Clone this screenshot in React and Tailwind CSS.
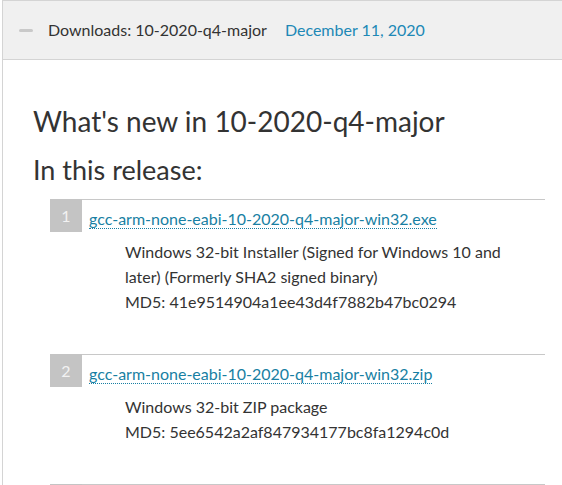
const files = [
  {
    num: 1,
    name: "gcc-arm-none-eabi-10-2020-q4-major-win32.exe",
    lines: [
      "Windows 32-bit Installer (Signed for Windows 10 and later) (Formerly SHA2 signed binary)",
      "MD5: 41e9514904a1ee43d4f7882b47bc0294",
    ],
  },
  {
    num: 2,
    name: "gcc-arm-none-eabi-10-2020-q4-major-win32.zip",
    lines: ["Windows 32-bit ZIP package", "MD5: 5ee6542a2af847934177bc8fa1294c0d"],
  },
  // third entry is cut off by the bottom of the window
  { num: null, name: "", lines: [] },
];

const FileItem = ({ item }) => (
  <div className="flex mb-[40px]">
    <div className="w-[32px] h-[33px] shrink-0 bg-[#c4c4c4] text-[#f2f2f2] text-[16px] flex items-center justify-center">
      {item.num}
    </div>
    <div className="flex-1 border-t border-[#c8c8c8]">
      <div className="pt-[7px] pl-[7px] leading-[24px]">
        <a
          href="#"
          className="text-[#187fa3] border-b border-dotted border-[#187fa3]"
        >
          {item.name}
        </a>
      </div>
      {item.lines.length > 0 && (
        <div className="mt-[8px] pl-[43px] w-[440px] leading-[25px] text-[#333]">
          {item.lines.map((l) => (
            <div key={l}>{l}</div>
          ))}
        </div>
      )}
    </div>
  </div>
);

export default function App() {
  return (
    <div
      className="w-[562px] h-[485px] overflow-hidden bg-white pl-[2px] text-[16px] text-[#333]"
      style={{ fontFamily: "Lato, 'Open Sans', sans-serif" }}
    >
      <div className="border-l border-t border-[#d4d4d4] w-[580px] h-[500px]">
        {/* header bar */}
        <div className="h-[59px] bg-[#f0f0f0] border-b border-[#d4d4d4] flex items-start pt-[17px] pl-[16px]">
          <span className="mt-[11px] w-[14px] h-[3px] rounded-full bg-[#c9c9c9]" />
          <span className="ml-[15px] leading-[24px]">Downloads: 10-2020-q4-major</span>
          <span className="ml-[18px] leading-[24px] text-[#2088b6]">December 11, 2020</span>
        </div>

        <div className="pl-[30px] pr-[37px]">
          <h1 className="mt-[44px] text-[28px] leading-[34px] text-[#333]">
            What's new in 10-2020-q4-major
          </h1>
          <h2 className="mt-[16px] text-[27px] leading-[32px] text-[#333]">
            In this release:
          </h2>
          <div className="mt-[13px] pl-[17px]">
            {files.map((f, i) => (
              <FileItem key={i} item={f} />
            ))}
          </div>
        </div>
      </div>
    </div>
  );
}
